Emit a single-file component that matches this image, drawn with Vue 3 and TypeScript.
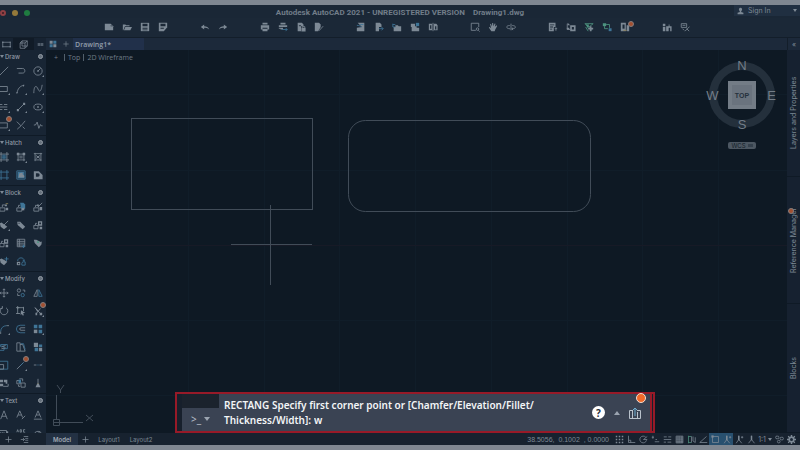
<script setup lang="ts">
import { h, ref, type FunctionalComponent } from 'vue'

type Kind = 's' | 'f' | 'b' | 'B' | 'd' | 'g' | 'G' | 'y'
type Shape = [Kind, string]

// s/f: light stroke/fill, b/B: blue, g/G: green, d: dark fill, y: yellow stroke
const icons: Record<string, Shape[]> = {
  newFile: [['f', 'M1 2H8L11 5V10H1Z'], ['d', 'M8 2V5H11L8 4Z']],
  open: [['f', 'M1 10V3H4L5 4H9V5H3.5L1.6 10ZM4 6H12L10 10H2.3Z']],
  save: [['f', 'M1 1H11V11H1Z'], ['d', 'M3 2H9V5H3ZM3 7H9V8H3ZM3 9H9V10H3Z']],
  saveAs: [['f', 'M1 1H11V6L7 11H1Z'], ['d', 'M3 2H9V5H3ZM3 7H7V8H3Z'], ['s', 'M7 10L11 6']],
  undo: [['f', 'M1 6L5 3V5C8 5 10 6 11 9C9 7.4 7 7 5 7V9Z']],
  redo: [['f', 'M11 6L7 3V5C4 5 2 6 1 9C3 7.4 5 7 7 7V9Z']],
  print: [['f', 'M3 1H9V3H3ZM1 4H11V9H9V7H3V9H1ZM3 8H9V11H3Z']],
  batch: [['f', 'M3 1H9V3H3ZM1 4H11V6H1ZM1 7H6V9H3V8H1Z'], ['b', 'M5 9H11M9 7L11 9L9 11']],
  pageLock: [['f', 'M2 1H7L9 3V5H6V11H2ZM6.5 7H11.5V11.5H6.5Z'], ['s', 'M7.5 7V5.5H10.5V7'], ['d', 'M3.5 4H6V5H3.5Z']],
  pageEdit: [['f', 'M1 1H6L8 3V6L5 11H1Z'], ['s', 'M6 10.5L11 5']],
  importDoc: [['f', 'M2 1H10V11H1V7L7 6Z'], ['b', 'M1 4C4 4 5 5 7 6M5 3H9']],
  exportDoc: [['f', 'M2 1H7L9 3V6H6V11H2Z'], ['b', 'M6 8H11M9 6L11 8L9 10']],
  folderTree: [['f', 'M2 11V6H4V4H7L8 5H11V11Z'], ['b', 'M1 2V6H4M1 3H4']],
  cloud: [['f', 'M1 2H6V5H8V7H11V11H2V6H1Z'], ['B', 'M7 1H11V5H7Z']],
  compare: [['f', 'M1 2H5V10H1ZM7 2H10L11.5 4V10H7Z'], ['s', 'M6 1V11'], ['d', 'M2.5 4H4V8H2.5ZM8.5 5H10V9H8.5Z']],
  zoomWin: [['s', 'M7 10H1.5V1.5H10.5V6M9 7A1.5 1.5 0 1 0 9 10A1.5 1.5 0 1 0 9 7M10 10L11.5 11.5']],
  hand: [['f', 'M4 11L1 6.5L2 6L3.7 7.4L2.5 2.6L3.5 2.2L4.8 5.5L5 1.2H6.2L6.5 5.2L8 1.7L9 2.2L8.2 5.8L10.3 4L11 4.8L8.7 9L8 11Z']],
  orbit: [['s', 'M7.5 4.2C13 4.5 12.5 8 7 8.2M4.5 4.2C-1 4.5 0 8 5 8.2M6 2V10M8.5 6.8L7 8.2L8.5 9.6']],
  props: [['f', 'M1 1H9V6H7V11H1Z'], ['d', 'M2.5 3H7.5V4H2.5ZM2.5 5.5H6V6.5H2.5ZM2.5 8H5V9H2.5Z'], ['s', 'M8 8H11M9.5 6.5V10.5']],
  blockPal: [['f', 'M5 4H11.5V11H5ZM1 7H4V9H1ZM2 1L5 4L2 4Z'], ['d', 'M7 6H9.5V9H7Z'], ['s', 'M1.5 2V9H5']],
  layerSt: [['g', 'M1 2H11L6 6ZM2 6L5 11M7 6L9 10'], ['f', 'M7 5H9V7H11V9H9V11H7V9H5V7H7Z'], ['G', 'M2 3H6L5 8Z']],
  dots: [['G', 'M1 1.5H5V5H1Z'], ['g', 'M5 3H9V7M3 5V8H7'], ['B', 'M8 7.5H11.5V11H8Z']],
  docs: [['f', 'M1 1H7V11H1ZM8 4H11V11H8Z'], ['d', 'M3 3H5.5V8H3Z'], ['y', 'M4 10H8']],
  measure: [['f', 'M1 2H4V5H1ZM1 6H4V11H1ZM5 5H8V3H9V5H11.5V11H9.8V7H8V11H5Z']],
  cleanUp: [['s', 'M1.5 2H8V6.5H1.5ZM3 4H6.5M6 11L11.5 5.5M8 8L11 11M3 8L5 10']],
  rect: [['s', 'M1 3H11V9H1ZM0 3H2M10 9H12M1 2V4M11 2V4M1 8V10M11 8V10']],
  cube: [['s', 'M1.5 4H8V11H1.5ZM1.5 4L4 1.2H11V8L8 11M8 4L11 1.2M4 1.2V8H11']],
  more: [['s', 'M3 4V8M5 4V8M7 4V8M9 4V8']],
  grid4: [['f', 'M1 1H5.5V5.5H1ZM6.5 6.5H11V11H6.5Z'], ['B', 'M6.5 1H11V5.5H6.5ZM1 6.5H5.5V11H1Z']],
  plus: [['s', 'M6 2V10M2 6H10']],
  line: [['s', 'M1 11L11 1']],
  pline: [['s', 'M1 3H8C11.5 3 11.5 8.5 8 8.5H3']],
  circle: [['s', 'M6 1A5 5 0 1 0 6 11A5 5 0 1 0 6 1M6 6L9 3M5 6H7M6 5V7']],
  rectangle: [['s', 'M0 3H10V9H0Z']],
  arc: [['s', 'M1.5 11C1.5 6 5 2 10 1.5M1 9.5V11.5M9 1V3']],
  spline: [['s', 'M1 11C1 2 4 1 6 6C8 11 10 8 11 1']],
  dashes: [['s', 'M1 3H4M6 3H10M0 6H10M1 9H4M6 9H10']],
  pointLine: [['s', 'M2 10L10 2'], ['f', 'M1 8.5H3.5V11H1ZM8.5 1H11V3.5H8.5Z']],
  ellipse: [['s', 'M6 2.5A5 3.5 0 1 0 6 9.5A5 3.5 0 1 0 6 2.5'], ['f', 'M5 5H7V7H5Z']],
  region: [['s', 'M0 3.5H10V9.5H0Z']],
  xline: [['s', 'M1 2L6 7L11 1M6 7L1.5 11M8 8L10.5 10.5']],
  zig: [['s', 'M1 6H3L5 2.5L7 10L9 5.5L10 7H11.5']],
  hatchA: [['s', 'M0 2.5H12M0 9.5H12M2.5 0V12M9.5 0V12'], ['b', 'M3 4.8H9M3 7H9M5 3V9M7 3V9']],
  hatchB: [['s', 'M1 2.5H11M1 9.5H11M2.5 1V11M9.5 1V11M4 5H8M4 7H8'], ['f', 'M1 1H4V4H1ZM8 1H11V4H8Z']],
  hatchC: [['s', 'M1 2H11M2 9.5H10M2.5 1V11M9.5 1V11M4 4L8 8M8 4L4 8M4 6H8']],
  hatchD: [['b', 'M0 2.5H12M0 9.5H12M2.5 0V12M9.5 0V12']],
  hatchE: [['b', 'M1 1H11V11H1Z'], ['B', 'M2 2H10V10H2Z'], ['f', 'M4 4L8 3V5L10 7V9H3Z']],
  hatchF: [['f', 'M1 1.5H7L11.5 6V11H1Z'], ['d', 'M3.5 4H6A2 2 0 0 1 6 8H3.5Z']],
  insert: [['s', 'M1 7H7V11H1ZM4 6V3.5H7'], ['f', 'M7 3H9.5V5H7ZM8 7H11V10H8Z'], ['y', 'M8 2H11']],
  insertB: [['s', 'M1 7H7V11H1ZM3 6V4H5'], ['B', 'M5 1H9L11 3V8H6Z'], ['f', 'M7 7H10V10H7Z']],
  insertC: [['s', 'M1 7H7V11H1ZM3 6V4H6M6 6L11 1'], ['f', 'M8 6H11V10H8ZM5 3H7V5H5Z']],
  tagEdit: [['f', 'M1 4L3 3L10 8L6 11L2 8Z'], ['s', 'M6 6L11 1']],
  tag: [['f', 'M1.5 2H5L11 8L8 11L2 6Z'], ['d', 'M3 3.3H4.3V4.6H3Z']],
  blockDup: [['s', 'M1 6.5H6V10.5H1ZM3 6V4H5'], ['f', 'M6 1.5H11V7H6ZM8 8H11V11H8Z'], ['d', 'M7.5 3H9.5V5H7.5Z']],
  hatchTile: [['s', 'M1.5 1.5H10.5V10.5H1.5ZM1.5 4H10.5M1.5 6.2H10.5M1.5 8.4H10.5M4 1.5V10.5'], ['b', 'M9 8V12M7 10H11']],
  tagDn: [['f', 'M1 2L4 2L10 5L11 3L10 8L7 11L2 6Z'], ['G', 'M5 4H7V6H5Z']],
  tagPlus: [['f', 'M1 4L3 3L10 7L6 11L2 8Z'], ['b', 'M9 1V6M6.5 3.5H11.5']],
  shapes: [['b', 'M2 6C2 1 10 1 10 6L8 5M7 11H11V7H8L7 9Z'], ['f', 'M1 7H5V11H1Z'], ['d', 'M2.5 8.5H4V10H2.5Z']],
  move: [['s', 'M6 1V11M1 6H11M4.5 2.5L6 1L7.5 2.5M4.5 9.5L6 11L7.5 9.5M2.5 4.5L1 6L2.5 7.5M9.5 4.5L11 6L9.5 7.5']],
  copy: [['s', 'M3.5 1A2 2 0 1 0 3.5 5A2 2 0 1 0 3.5 1M8 2.5H10.5V5M2 6.5V9H4.5'], ['b', 'M8 6.5A2 2 0 1 0 8 10.5A2 2 0 1 0 8 6.5']],
  mirror: [['s', 'M5 2V10H1Z'], ['b', 'M7 2V10H11Z']],
  rotate: [['s', 'M8.5 2.2A4.5 4.5 0 1 1 4 2M4 0V3H1.5']],
  select: [['s', 'M2 2H9V6M2 2V9H5M0 2H4M2 0V4M9 1V3M0 9H3'], ['f', 'M6 5L11 8L8.5 8.8L9.5 11L8 11.5L7 9.5L5.5 11Z']],
  trim: [['s', 'M2 2L9 9M9 3L4 9'], ['f', 'M8 8H11V11H8ZM3 8H5V11H3ZM2 1L7 6L5 7Z']],
  fillet: [['b', 'M2 9C2 5 5 2 9 2'], ['s', 'M2 9V12M9 2H12']],
  offset: [['b', 'M11 1.5H5A4.5 4.5 0 0 0 5 10.5H11'], ['s', 'M11 4.5H6A1.5 1.5 0 0 0 6 7.5H11']],
  array: [['B', 'M1 1H5.2V5.2H1ZM6.8 1H11V5.2H6.8ZM6.8 6.8H11V11H6.8Z'], ['f', 'M1 6.8H5.2V11H1Z']],
  extrude: [['b', 'M0 5H6V10H0ZM2 5V3H10V8H6'], ['s', 'M3 6L8 4M3 8L8 7']],
  stretch: [['s', 'M1 1H5V11H1ZM5 11H11L8 3H5'], ['b', 'M6 2H9L11 9']],
  scaleBox: [['f', 'M1 1H6V6H1ZM7 7H11V11H7Z'], ['B', 'M7 3H11V6H7ZM2 7H6V11H2Z']],
  scale: [['b', 'M0 1.5H10.5V11H0'], ['s', 'M0 5.5H5.5V11H0Z']],
  extend: [['s', 'M1 11L9 3'], ['b', 'M5 7L9 3']],
  brk: [['s', 'M1 6H4M8 6H11'], ['b', 'M4.5 6H5.5M6.5 6H7.5']],
  join: [['f', 'M0 2H5V5H0ZM6 2H10V7H8V5H6ZM1 7H5V10H1Z'], ['s', 'M5 10H11V7']],
  overlap: [['s', 'M1 3H5V7H1ZM6 6H11V11H6ZM4 1H8V4M3 8V10H5'], ['B', 'M3 2H6V6H3Z']],
  brush: [['s', 'M6 1V7'], ['y', 'M6 6V8'], ['f', 'M5 7H7L9 11H3Z']],
  a1: [['s', 'M2 11L6 1L10 11M3.5 7.5H8.5']],
  a2: [['s', 'M1 9L4.5 1L8 9M2.5 6H6.5M7 11L11 7']],
  a3: [['s', 'M2.5 9L6 1L9.5 9M4 6H8M1 11H11']],
  fieldT: [['s', 'M0 3H9V9H0ZM2 5V7M4 5V7M6 5V7'], ['f', 'M9 4H11V8H9Z']],
  spell: [['s', 'M1 5L2 2L3 5M5 5V2H6.5V5ZM11 2H9V5H11M4 9L6 11L10 7']],
  gauge: [['s', 'M1 9A5 5 0 1 1 11 9ZM6 8L8 4M4 9V7']],
  dock: [['s', 'M5 2H11M7 4.5H11M7 7H11M5 10H11M1 6H6M4 4L6 6L4 8']],
  gridDots: [['f', 'M1 1H3V3H1ZM5 1H7V3H5ZM9 1H11V3H9ZM1 5H3V7H1ZM5 5H7V7H5ZM9 5H11V7H9ZM1 9H3V11H1ZM5 9H7V11H5ZM9 9H11V11H9Z']],
  ortho: [['s', 'M2 1V10H11M2 7H5V10']],
  polar: [['s', 'M9 3A4.5 4.5 0 1 0 10 7M6 6L11 2M6 6H11']],
  dyn: [['s', 'M1 3H4M2.5 1V5M5 9H11M6 6H8']],
  lwt: [['s', 'M1 2.5H5M7 2.5H11M1 6H11M1 9.5H4M6 9.5H11']],
  transp: [['s', 'M1.5 1.5H10.5V10.5H1.5ZM4 1.5V10.5M6.5 1.5V10.5M9 1.5V10.5M1.5 4H10.5M1.5 6.5H10.5M1.5 9H10.5']],
  cycle: [['g', 'M2 1V11M2 2H6M2 10H6'], ['s', 'M6 2V10M8 2V8L11 10V3']],
  angle: [['s', 'M10 2L1 10H11']],
  osnap: [['s', 'M2 2H10V10H2Z'], ['f', 'M0.5 0.5H3.5V3.5H0.5Z']],
  person: [['s', 'M6 1V6L2 11M6 6L10 11'], ['f', 'M5 1H7V7H5Z']],
  personS: [['s', 'M5 1V6L1.5 11M5 6L9 11M8 3H11M9.5 1.5V4.5'], ['f', 'M4 1H6V7H4Z']],
  links: [['s', 'M3 1.5A1.8 1.8 0 1 0 3 5A1.8 1.8 0 1 0 3 1.5M9 3A1.8 1.8 0 1 0 9 6.5A1.8 1.8 0 1 0 9 3M5 7A1.8 1.8 0 1 0 5 10.6A1.8 1.8 0 1 0 5 7']],
  gear: [['f', 'M5 0H7V2L8.6 2.2L10 1L11 2L9.8 3.5L10 5H12V7H10L9.8 8.5L11 10L10 11L8.6 9.8L7 10V12H5V10L3.4 9.8L2 11L1 10L2.2 8.5L2 7H0V5H2L2.2 3.5L1 2L2 1L3.4 2.2L5 2Z'], ['d', 'M6 4A2 2 0 1 0 6 8A2 2 0 1 0 6 4Z']],
  user: [['f', 'M6 0.5A2.8 3 0 0 0 4.5 6L5 7.5L1 9V11.5H11V9L7 7.5L7.5 6A2.8 3 0 0 0 6 .5Z']],
}

const palette = {
  light: '#7d8995',
  blue: '#3f7597',
  green: '#4d9480',
  yellow: '#8e8258',
  dark: '#1b2837',
}

const Icon: FunctionalComponent<{ name: string }> = (props) =>
  h(
    'svg',
    { viewBox: '0 0 12 12', 'aria-hidden': 'true' },
    (icons[props.name] ?? []).map(([kind, d]) => {
      const color =
        kind === 's' || kind === 'f' ? palette.light
        : kind === 'b' || kind === 'B' ? palette.blue
        : kind === 'g' || kind === 'G' ? palette.green
        : kind === 'y' ? palette.yellow
        : palette.dark
      const filled = 'fBGd'.includes(kind)
      return h('path', {
        d,
        fill: filled ? color : 'none',
        stroke: filled ? 'none' : color,
        'stroke-width': 1,
      })
    }),
  )
Icon.props = ['name']

const toolbar: string[][] = [
  ['newFile', 'open', 'save', 'saveAs'],
  ['undo', 'redo'],
  ['print', 'batch', 'pageLock', 'pageEdit'],
  ['importDoc', 'exportDoc', 'folderTree', 'cloud', 'compare'],
  ['zoomWin', 'hand', 'orbit'],
  ['props', 'blockPal', 'layerSt', 'dots', 'docs'],
  ['measure', 'cleanUp'],
]

const sections: { title: string; tools: string[] }[] = [
  { title: 'Draw', tools: ['line', 'pline', 'circle', 'rectangle', 'arc', 'spline', 'dashes', 'pointLine', 'ellipse', 'region', 'xline', 'zig'] },
  { title: 'Hatch', tools: ['hatchA', 'hatchB', 'hatchC', 'hatchD', 'hatchE', 'hatchF'] },
  { title: 'Block', tools: ['insert', 'insertB', 'insertC', 'tagEdit', 'tag', 'blockDup', 'blockDup', 'hatchTile', 'tagDn', 'tagPlus', 'shapes'] },
  { title: 'Modify', tools: ['move', 'copy', 'mirror', 'rotate', 'select', 'trim', 'fillet', 'offset', 'array', 'extrude', 'stretch', 'scaleBox', 'scale', 'extend', 'brk', 'join', 'overlap', 'brush'] },
  { title: 'Text', tools: ['a1', 'a2', 'a3', 'fieldT', 'spell', 'gauge'] },
]
const badged = new Set(['region', 'trim', 'extend', 'docs'])
const flyout = new Set(['circle', 'rectangle', 'arc', 'spline', 'dashes', 'pointLine', 'ellipse', 'region', 'hatchB', 'tagEdit', 'trim', 'fillet', 'array', 'extend'])

const statusTools = ['gridDots', 'ortho', 'polar', 'dyn', 'lwt', 'transp', 'cycle', 'angle', 'osnap', 'personS', 'personS', 'person']
const gridX = [142, 218, 293, 369, 445, 521, 596, 672]
const gridY = [44, 120, 270, 345]
const command = ref('w')
</script>

<template>
  <div class="app">
    <header class="titlebar">
      <div class="lights"><i class="red" /><i class="amber" /><i class="green" /></div>
      <h1>Autodesk AutoCAD 2021 - UNREGISTERED VERSION <span>Drawing1.dwg</span></h1>
      <button class="signin"><Icon name="user" />Sign In<i class="caret" /></button>
    </header>

    <nav class="toolbar">
      <div v-for="(group, g) in toolbar" :key="g" class="group">
        <button v-for="name in group" :key="name" :aria-label="name">
          <Icon :name="name" /><i v-if="badged.has(name)" class="badge" />
        </button>
      </div>
    </nav>

    <div class="tabs">
      <div class="modes">
        <button aria-label="Drafting"><Icon name="rect" /></button>
        <button class="on" aria-label="Modeling"><Icon name="cube" /></button>
        <button aria-label="More"><Icon name="more" /></button>
      </div>
      <button class="tab-icon" aria-label="Tab overview"><Icon name="grid4" /></button>
      <button class="tab-icon" aria-label="New tab"><Icon name="plus" /></button>
      <button class="tab">Drawing1*</button>
      <button class="collapse" aria-label="Collapse">«</button>
    </div>

    <div class="body">
      <aside class="sidebar">
        <section v-for="s in sections" :key="s.title">
          <h2><i class="caret" /><span>{{ s.title }}</span><i class="knob" /></h2>
          <div class="tools">
            <button v-for="(t, i) in s.tools" :key="i" :aria-label="t">
              <Icon :name="t" />
              <i v-if="flyout.has(t)" class="corner" />
              <i v-if="badged.has(t)" class="badge" />
            </button>
          </div>
        </section>
      </aside>

      <main class="canvas">
        <svg class="drawing" aria-hidden="true">
          <g stroke="#101d29">
            <line v-for="x in gridX" :key="'x' + x" :x1="x + 0.5" :x2="x + 0.5" y1="0" y2="100%" />
            <line v-for="y in gridY" :key="'y' + y" x1="0" x2="100%" :y1="y + 0.5" :y2="y + 0.5" />
          </g>
          <line x1="0" x2="100%" y1="195.5" y2="195.5" stroke="#171a26" />
          <g fill="none" stroke="#414c58">
            <rect x="85.5" y="68.5" width="181" height="91" />
            <rect x="302.5" y="70.5" width="242" height="91" rx="17" />
            <path d="M185 194.5H266M224.5 155V235" />
            <path d="M7 372.5H37M10.5 370V345M7.5 369.5H13.5V375.5H7.5ZM11 335L14.5 340L18 335M14.5 340V343M40 365L47 371M47 365L40 371" />
          </g>
        </svg>

        <div class="view-label"><span>+</span><i /><button>Top</button><i /><button>2D Wireframe</button></div>

        <div class="compass">
          <div class="ring" />
          <b class="n">N</b><b class="w">W</b><button class="cube">TOP</button><b class="e">E</b><b class="s">S</b>
        </div>
        <button class="wcs">WCS <i /></button>

        <form class="command" @submit.prevent>
          <div class="command-main">
            <button class="prompt" type="button"><span>&gt;_</span><i class="caret" /></button>
            <div class="lines">
              <label for="cmd">RECTANG Specify first corner point or [Chamfer/Elevation/Fillet/</label>
              <div class="entry"><label for="cmd">Thickness/Width]:</label><input id="cmd" v-model="command" type="text" /></div>
            </div>
            <button class="help" type="button" aria-label="Help">?</button>
            <button class="up" type="button" aria-label="History"><i /></button>
            <button class="share" type="button" aria-label="Share">
              <svg viewBox="0 0 14 14" fill="none" stroke="#b9c2cc">
                <path d="M5 4.5H1.500V12.500H12.500V4.500H9M4.500 4.500V12.500M9.500 6V12.500" />
                <path d="M7 10V2M5 4L7 2L9 4" stroke="#6faed0" />
              </svg>
              <i class="alert" />
            </button>
          </div>
        </form>
      </main>

      <aside class="dock">
        <button class="layers">Layers and Properties</button>
        <button class="refs"><i class="badge" />Reference Manager</button>
        <button class="blocks">Blocks</button>
      </aside>
    </div>

    <footer class="status">
      <div class="left">
        <button aria-label="Add"><Icon name="plus" /></button>
        <button aria-label="Dock"><Icon name="dock" /></button>
      </div>
      <button class="layout model">Model</button>
      <button class="add" aria-label="New layout"><Icon name="plus" /></button>
      <button class="layout">Layout1</button>
      <button class="layout">Layout2</button>
      <span class="coords">38.5056,&nbsp; 0.1002&nbsp; , 0.0000</span>
      <button v-for="(t, i) in statusTools" :key="i" class="st" :class="{ on: i === 8 || i === 9 }" :aria-label="t"><Icon :name="t" /></button>
      <button class="ratio">1:1<i class="caret" /></button>
      <button class="st" aria-label="Units"><Icon name="links" /></button>
      <button class="st" aria-label="Settings"><Icon name="gear" /></button>
    </footer>
  </div>
</template>

<style>
body {
  margin: 0;
  background: #7f8791;
}
</style>

<style scoped>
.app {
  box-sizing: border-box;
  display: flex;
  flex-direction: column;
  height: 100vh;
  padding: 5px 0;
  overflow: hidden;
  background: #7f8791;
  color: #7d8995;
  font-family: Inter, "Liberation Sans", sans-serif;
  font-size: 7px;
}
button {
  position: relative;
  display: flex;
  align-items: center;
  justify-content: center;
  flex: none;
  margin: 0;
  padding: 0;
  border: 0;
  background: none;
  color: inherit;
  font: inherit;
  white-space: nowrap;
}
svg {
  display: block;
  flex: none;
}
.caret {
  width: 0;
  height: 0;
  border: 2px solid transparent;
  border-top: 3px solid #7d8995;
  border-bottom: 0;
}
.badge {
  position: absolute;
  top: 0;
  right: 0;
  box-sizing: border-box;
  width: 6px;
  height: 6px;
  border: 1px solid #877d7c;
  border-radius: 50%;
  background: #a35031;
}

.titlebar {
  display: grid;
  grid-template-columns: 1fr auto 1fr;
  flex: none;
  height: 13px;
  background: #1a2736;
}
.lights {
  display: flex;
  align-items: center;
  gap: 6px;
  padding-top: 2px;
}
.lights i {
  width: 6px;
  height: 6px;
  border-radius: 50%;
}
.lights .red { box-sizing: border-box; border: 2px solid #8f3f43; background: #3b1d24; }
.lights .amber { background: #94793a; }
.lights .green { background: #1f7c40; }
h1 {
  display: flex;
  gap: 8px;
  margin: 0;
  padding-top: 2px;
  color: #717d89;
  font-family: Roboto, "Liberation Sans", sans-serif;
  font-size: 8px;
  font-weight: 700;
  line-height: 11px;
}
.signin {
  justify-self: end;
  align-self: start;
  gap: 4px;
  box-sizing: border-box;
  width: 66px;
  height: 11px;
  padding: 0 3px;
  background: #202f41;
}
.signin svg { width: 7px; height: 8px; }
.signin .caret { margin-left: auto; }

.toolbar {
  display: flex;
  flex: none;
  gap: 24px;
  box-sizing: border-box;
  height: 19px;
  padding: 0 0 2px 100px;
  background: #1b2837;
}
.group { display: flex; }
.group button { width: 18px; }
.group svg { width: 10px; height: 10px; }
.group .badge { top: 3px; }

.tabs {
  display: flex;
  flex: none;
  height: 12px;
  border-top: 1px solid #131e2a;
  background: #1c293a;
}
.modes {
  display: flex;
  width: 46px;
  background: #172332;
}
.modes button { width: 13px; }
.modes .on { width: 21px; background: #111b27; }
.modes svg { width: 9px; height: 9px; }
.tab-icon { width: 13px; }
.tab-icon svg { width: 8px; height: 8px; }
.tab {
  justify-content: flex-start;
  width: 71px;
  margin-left: 1px;
  padding-left: 2px;
  background: #21304a;
  color: #929da9;
  font-family: "Open Sans", sans-serif;
  font-weight: 600;
}
.collapse {
  width: 13px;
  margin-left: auto;
  border-left: 1px solid #131e2a;
}

.body {
  display: flex;
  flex: 1;
  min-height: 0;
}
.sidebar {
  flex: none;
  width: 46px;
  overflow: hidden;
  background: #182534;
}
.sidebar section {
  padding-bottom: 1px;
  border-bottom: 1px solid #0f1a26;
}
h2 {
  display: flex;
  align-items: center;
  gap: 1px;
  height: 12px;
  margin: 0;
  padding-right: 3px;
  color: #929ca6;
  font-size: 6px;
  font-weight: 500;
}
.knob {
  box-sizing: border-box;
  width: 5px;
  height: 5px;
  margin-left: auto;
  border: 1px solid #939ca5;
  border-radius: 50%;
  background: #66717d;
}
.tools {
  display: grid;
  grid-template-columns: repeat(3, 17px);
  grid-auto-rows: 18px;
  margin-left: -5px;
}
.tools svg { width: 10px; height: 10px; }
.corner {
  position: absolute;
  right: 2px;
  bottom: 3px;
  border: 1px solid #7d8995;
  border-top-color: transparent;
  border-left-color: transparent;
}

.canvas {
  position: relative;
  flex: 1;
  min-width: 0;
  background: #0e1924;
}
.drawing {
  position: absolute;
  inset: 0;
  width: 100%;
  height: 100%;
}
.view-label {
  position: absolute;
  top: 2px;
  left: 8px;
  display: flex;
  align-items: center;
  gap: 3px;
  height: 11px;
  color: #6f7b86;
  font-family: "Open Sans", sans-serif;
}
.view-label i {
  width: 1px;
  height: 7px;
  background: #53606c;
}
.view-label i:nth-of-type(1) { margin-left: 3px; }
.compass {
  position: absolute;
  top: 8px;
  right: 8px;
  display: grid;
  grid-template: 15px 44px 15px / 15px 44px 15px;
  place-items: center;
  color: #737d88;
  font: 13px "Liberation Sans", sans-serif;
}
.compass b { z-index: 1; font-weight: 400; }
.ring {
  position: absolute;
  inset: 4px;
  border: 8px solid #24303c;
  border-radius: 50%;
}
.n, .s { grid-column: 2; }
.n { grid-row: 1; }
.w { grid-area: 2 / 1; }
.e { grid-area: 2 / 3; }
.s { grid-row: 3; }
.cube {
  grid-area: 2 / 2;
  box-sizing: border-box;
  width: 28px;
  height: 28px;
  border: 4px solid #737c86;
  background: #6a737e;
  color: #26313d;
  font: 700 7px "Liberation Sans", sans-serif;
}
.wcs {
  position: absolute;
  top: 92px;
  right: 31px;
  gap: 2px;
  width: 28px;
  height: 7px;
  border-radius: 2px;
  background: #4c5762;
  color: #121d28;
  font-size: 6px;
}
.wcs i {
  width: 5px;
  height: 3px;
  background: #35414d;
}

.command {
  position: absolute;
  bottom: 0;
  left: 129px;
  right: 132px;
  box-sizing: border-box;
  padding: 0 1px 0 5px;
  border: 2px solid #971a28;
  background: #17202c;
}
.command-main {
  display: flex;
  align-items: center;
  height: 37px;
  border-right: 2px solid #971a28;
  background: #3a4353;
  color: #f3f5f7;
}
.prompt {
  align-self: stretch;
  align-items: flex-end;
  gap: 3px;
  box-sizing: border-box;
  width: 37px;
  padding-bottom: 5px;
  background: linear-gradient(#1b232d 14px, transparent 14px);
  color: #b7bec8;
  font: 10px/14px "Noto Sans", sans-serif;
}
.prompt .caret { margin-bottom: 5px; border-width: 4px 3px 0; border-top-color: #9ba4b0; }
.lines {
  flex: 1;
  min-width: 0;
  padding-left: 5px;
  font: 600 10px/15px "Noto Sans", sans-serif;
  white-space: nowrap;
}
.lines label { display: block; }
.entry { display: flex; gap: 3px; }
.entry input {
  flex: 1;
  min-width: 0;
  height: 15px;
  padding: 0;
  border: 0;
  outline: 0;
  background: none;
  color: inherit;
  font: inherit;
}
.help {
  width: 13px;
  height: 13px;
  border-radius: 50%;
  background: #fff;
  color: #252e3a;
  font: 700 10px/12px "Noto Sans", sans-serif;
}
.up { width: 23px; height: 12px; }
.up i {
  border: 3px solid transparent;
  border-top: 0;
  border-bottom: 4px solid #9ba4b0;
}
.share { margin-right: 8px; }
.share svg { width: 14px; height: 14px; }
.alert {
  position: absolute;
  top: -13px;
  right: -4px;
  box-sizing: border-box;
  width: 10px;
  height: 10px;
  border: 1px solid #f4ddd2;
  border-radius: 50%;
  background: #f06a2a;
}

.dock {
  display: flex;
  flex: none;
  flex-direction: column;
  width: 13px;
  background: #162130;
}
.dock button {
  justify-content: center;
  width: 13px;
  writing-mode: vertical-rl;
  transform: rotate(180deg);
  border-top: 1px solid #0f1a26;
}
.layers { flex: 0 0 127px; }
.refs { flex: 0 0 127px; overflow: hidden; }
.blocks { flex: 1; }
.refs .badge { top: auto; right: 1px; bottom: 31px; }

.status {
  display: flex;
  align-items: center;
  flex: none;
  height: 12px;
  padding-right: 3px;
  background: #17222f;
}
.status svg { width: 9px; height: 9px; }
.left { display: flex; width: 46px; }
.left button { width: 16px; }
.layout { width: 32px; height: 12px; font-size: 6px; }
.model { background: #233143; color: #a0a9b3; font-weight: 600; }
.add { width: 15px; }
.coords { margin-left: auto; padding-right: 4px; font-family: "Liberation Sans", sans-serif; white-space: nowrap; }
.st { width: 12px; height: 12px; }
.st.on { background: #28506f; }
.ratio { gap: 2px; width: 16px; }
</style>
